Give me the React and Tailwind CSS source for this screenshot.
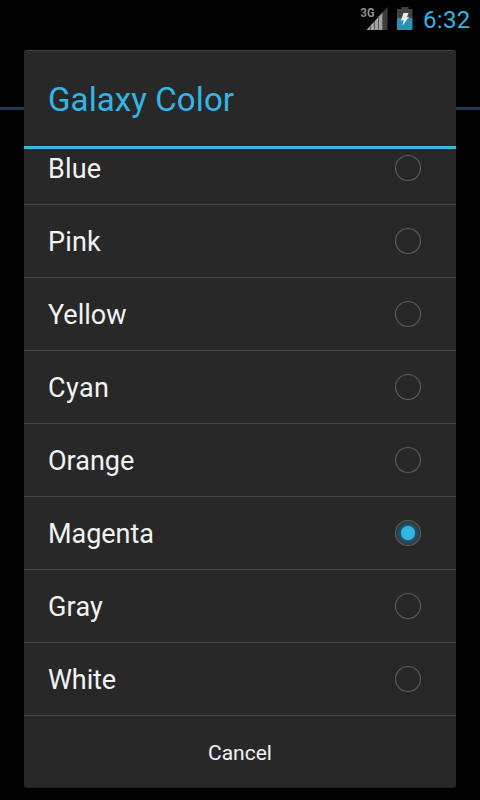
import { useState } from "react";

const colors = [
  { name: "Blue", text: "tracking-[0.2px]" },
  { name: "Pink", text: "tracking-[0.2px]" },
  { name: "Yellow", text: "tracking-[0px]" },
  { name: "Cyan", text: "tracking-[0.4px]" },
  { name: "Orange", text: "tracking-[0px]" },
  { name: "Magenta", text: "tracking-[-0.05px]" },
  { name: "Gray", text: "tracking-[0.2px]" },
  { name: "White", text: "tracking-[-0.1px]" },
];

function SignalIcon() {
  return (
    <svg width="28" height="26" viewBox="0 0 28 26">
      <text
        x="0.5"
        y="12"
        fontSize="13.5"
        fontWeight="700"
        fontFamily="Roboto, sans-serif"
        textLength="14"
        lengthAdjust="spacingAndGlyphs"
        fill="#8f8f8f"
      >
        3G
      </text>
      <path d="M22.5 7.5 27.5 2v23h-5Z" fill="#3c3c3c" />
      <path d="M6.5 25 22.5 7.5V25Z" fill="#a3a3a3" />
      <path
        d="M10.5 20v5M14.5 16v9M18.5 11.5V25"
        stroke="#5a5a5a"
        strokeWidth="1"
      />
    </svg>
  );
}

function BatteryIcon() {
  return (
    <svg width="16" height="24" viewBox="0 0 16 24">
      <path d="M4.5 0h7v2H15.5V11H0V2h4.5Z" fill="#434343" />
      <path d="M0 11h15.5v12H0Z" fill="#2d8fb2" />
      <path
        d="M6.5 6h5L9.8 10.3l2.4-.6L5.2 19l1.6-6-2.8.8Z"
        fill="#f0f0f0"
      />
    </svg>
  );
}

function Radio({ checked }) {
  return (
    <svg width="28" height="28" viewBox="0 0 28 28">
      <defs>
        <radialGradient id="glow">
          <stop offset="0.55" stopColor="#226078" />
          <stop offset="0.8" stopColor="#264450" />
          <stop offset="1" stopColor="#293236" />
        </radialGradient>
      </defs>
      <circle
        cx="14"
        cy="14"
        r="12.5"
        fill={checked ? "url(#glow)" : "none"}
        stroke="#5a5c5d"
        strokeWidth="1.2"
      />
      {checked && <circle cx="14" cy="14" r="7" fill="#33b5e5" />}
    </svg>
  );
}

export default function App() {
  const [selected, setSelected] = useState("Magenta");

  return (
    <div className="relative h-[800px] w-[480px] overflow-hidden bg-black font-[Roboto,sans-serif]">
      {/* Status bar */}
      <div className="flex h-[38px] items-start justify-end pr-[10px]">
        <div className="mt-[5px] mr-[9px]">
          <SignalIcon />
        </div>
        <div className="mt-[7px] mr-[10px]">
          <BatteryIcon />
        </div>
        <div className="mt-1 w-[47px] text-2xl leading-8 tracking-[0.3px] text-[#33b5e5]">
          6:32
        </div>
      </div>

      {/* Action bar line behind the dialog */}
      <div className="absolute top-[107px] left-0 h-[3px] w-full bg-[#0d4156]" />

      {/* Dialog */}
      <div className="relative mx-6 mt-3 flex h-[738px] flex-col overflow-hidden rounded-[3px] border-t border-b border-t-[#404040] border-b-[#1e1e1e] bg-[#282828]">
        <div className="flex h-[98px] shrink-0 items-center border-b-[3px] border-[#33b5e5] pt-0.5 pl-6">
          <h1 className="text-[33px] tracking-[0.1px] whitespace-nowrap text-[#33b5e5]">
            Galaxy Color
          </h1>
        </div>

        {/* Options, scrolled a little */}
        <div className="h-[566px] shrink-0 overflow-hidden">
          <ul className="-mt-[17px]">
            {colors.map((c) => (
              <li
                key={c.name}
                onClick={() => setSelected(c.name)}
                className="flex h-[73px] items-center justify-between border-b border-[#434343] pr-[34px] pl-6 text-[27px] text-[#f3f3f3]"
              >
                <span className={`pt-0.5 ${c.text}`}>{c.name}</span>
                <Radio checked={selected === c.name} />
              </li>
            ))}
          </ul>
        </div>

        <button className="flex-1 border-t border-[#434343] pt-[5px] text-[21px] text-[#f3f3f3]">
          Cancel
        </button>
      </div>
    </div>
  );
}
